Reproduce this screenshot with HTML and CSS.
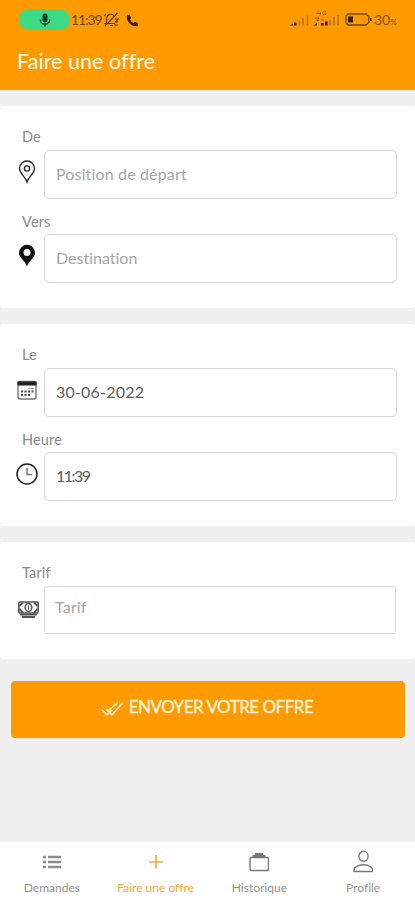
FILE: index.html
```html
<!DOCTYPE html>
<html lang="fr">
<head>
<meta charset="utf-8">
<title>Faire une offre</title>
<link rel="stylesheet" href="styles.css">
</head>
<body>
<div class="app">
  <header class="header">
    <div class="status">
      <div class="status-left">
        <span class="mic-pill">
          <svg width="12" height="14" viewBox="0 0 12 14"><rect x="3.500" y="0.500" width="5" height="9" rx="2.500" fill="#123c26"/><path d="M1.300 6.500c0 6.300 9.400 6.300 9.400 0M6 11v2.500" fill="none" stroke="#123c26" stroke-width="1.300"/></svg>
        </span>
        <span class="clock">11:39</span>
        <svg class="bell" width="17" height="15" viewBox="0 0 17 15" fill="none" stroke="#5b3a05" stroke-width="1.200"><path d="M1 11.500h11M3.500 11V6.500C4 2 9 1 11 4M7 13.500h3M14.500 1L2 14M1 4l2-2M12 7h3l-2.500 3H15M11 13h4"/></svg>
        <svg class="phone" width="13" height="13" viewBox="0 0 13 13"><path d="M1 1.500L3.500.8 5.200 4 4 5.400c.7 1.700 1.900 2.900 3.600 3.600L9 7.800l3.200 1.700-.7 2.500C6 13.500-.5 7 1 1.500z" fill="#33220a"/></svg>
      </div>
      <div class="status-right">
        <svg width="20" height="12" viewBox="0 0 20 12"><path d="M0 11.500l3-2v2zM4 8.500h2.500v3H4z" fill="#2b1c04"/><path d="M9.500 11.500v-5M13 11.500V4M17.500 11.500V1.500" stroke="#b57410" stroke-width="1.600"/></svg>
        <svg class="signal-two" width="26" height="16" viewBox="0 0 26 16"><path d="M5 .5L2.500 3.500H7M6 2v3.500M12 1.500C8 0 7 5.500 12 4.500V3H10" fill="none" stroke="#a56b12"/><path d="M1 8h4l-2 2.500h2M7 10h3" fill="none" stroke="#80520a"/><path d="M0 15.500l3-3v3zM7 13h2.500v2.500H7zM11 11.500h2.500v4H11z" fill="#2b1c04"/><path d="M16 15.500v-6M20 15.500V7M24 15.500V5" stroke="#b57410" stroke-width="1.600"/></svg>
        <svg class="battery" width="27" height="13" viewBox="0 0 27 13"><path d="M3 1h18l3 3v5l-3 3H3L1 10V3z" fill="none" stroke="#704808" stroke-width="1.300"/><path d="M3 3.500h5v6H3zM25 5h1.500v3H25z" fill="#33220a"/></svg>
        <span class="percent">30<small>%</small></span>
      </div>
    </div>
    <h1 class="title">Faire une offre</h1>
  </header>
  <main class="content">
    <section class="card">
      <label class="label">De</label>
      <div class="row">
        <svg class="icon" width="18" height="24" viewBox="0 0 18 24" fill="none" stroke="#292929" stroke-width="1.400"><path d="M9 22C7 16 1.500 13.500 1.500 8.500a7.500 7.500 0 0 1 15 0C16.500 13.500 11 16 9 22z"/><circle cx="9" cy="8.500" r="2.600"/></svg>
        <div class="field placeholder">Position de départ</div>
      </div>
      <label class="label">Vers</label>
      <div class="row">
        <svg class="icon" width="18" height="24" viewBox="0 0 18 24"><path fill-rule="evenodd" d="M9 22.500C7 16.500 1 14 1 8.800a8 8 0 0 1 16 0C17 14 11 16.500 9 22.500zM9 12a3.500 3.500 0 1 0 0-7 3.500 3.500 0 0 0 0 7z" fill="#111"/></svg>
        <div class="field placeholder destination">Destination</div>
      </div>
    </section>
    <section class="card">
      <label class="label">Le</label>
      <div class="row">
        <svg class="icon icon-date" width="20" height="20" viewBox="0 0 20 20"><rect x="1" y="1.500" width="18" height="17.500" rx="2" fill="#fff" stroke="#777" stroke-width="1.400"/><path d="M.5 1.500h19v4H.5z" fill="#222"/><path d="M11 8.500h6" stroke="#aaa"/><path d="M4 11.500h13M4 15h9" stroke="#444" stroke-width="1.800" stroke-dasharray="2 1.500"/></svg>
        <div class="field date">30-06-2022</div>
      </div>
      <label class="label">Heure</label>
      <div class="row">
        <svg class="icon icon-clock" width="22" height="22" viewBox="0 0 22 22" fill="none"><circle cx="11" cy="11" r="10" stroke="#222" stroke-width="1.500"/><path d="M11 5v6.500h5" stroke="#777" stroke-width="1.500"/></svg>
        <div class="field time">11:39</div>
      </div>
    </section>
    <section class="card card-price">
      <label class="label">Tarif</label>
      <div class="row">
        <svg class="icon icon-money" width="21" height="17" viewBox="0 0 21 17" fill="none" stroke="#555"><rect x=".8" y="1" width="19.400" height="11" rx="1" stroke-width="1.600"/><ellipse cx="10.500" cy="6.500" rx="3.300" ry="4" stroke-width="1.600"/><path d="M1.500 5L5 1.500M1.500 8L5 11.500M19.500 5L16 1.500M19.500 8L16 11.500" stroke-width="1.800"/><path d="M10.500 4.500v4" stroke-width="1.200"/><path d="M2 13.600h17M4 15.900h13" stroke-width="2"/></svg>
        <div class="field placeholder">Tarif</div>
      </div>
    </section>
    <button class="submit">
      <svg width="23" height="16" viewBox="0 0 23 16" fill="none" stroke="#fff4df" stroke-width="1.500"><path d="M1 9l5 5M7.500 9.500L17 1.500M5.500 8l5.500 6L22 1.500M6 14l5-5"/></svg>
      <span>ENVOYER VOTRE OFFRE</span>
    </button>
  </main>
  <nav class="nav">
    <a class="tab"><svg width="20" height="24" viewBox="0 0 20 24" stroke="#8c8c8c" stroke-width="2.400"><path d="M1 7h3M6 7h13M1 12h3M6 12h13M1 17h3M6 17h13"/></svg><span>Demandes</span></a>
    <a class="tab active"><svg width="20" height="24" viewBox="0 0 20 24" stroke="#f5a83a" stroke-width="1.700"><path d="M10 5v13.500M3 12h14"/></svg><span>Faire une offre</span></a>
    <a class="tab"><svg width="20" height="24" viewBox="0 0 20 24" fill="none" stroke="#777" stroke-width="1.400"><rect x="1" y="7.500" width="18.500" height="13" rx="1.500"/><path d="M3.500 6h13M6 4h8" stroke-width="2"/></svg><span>Historique</span></a>
    <a class="tab"><svg width="20" height="24" viewBox="0 0 20 24" fill="none" stroke="#777" stroke-width="1.400"><ellipse cx="10.500" cy="6.300" rx="4.600" ry="5"/><path d="M1 21.500C-.5 12.500 21.500 12.500 19.500 21.500z" stroke-linejoin="round"/></svg><span>Profile</span></a>
  </nav>
</div>
</body>
</html>
```
FILE: styles.css
```css
* { box-sizing: border-box; }
body { margin: 0; background: #f0f0f0; font-family: Lato, "Open Sans", sans-serif; font-variant-ligatures: none; color: #5c5c5c; }
.app { width: 415px; height: 900px; display: flex; flex-direction: column; overflow: hidden; }
.header { height: 90px; background: #ff9b00; flex: none; }
.status { display: flex; justify-content: space-between; height: 39px; padding: 0 17px 0 19px; }
.status-left, .status-right { display: flex; align-items: center; }
.mic-pill { width: 51px; height: 21px; border-radius: 11px; background: #3ddc84; display: flex; align-items: center; justify-content: center; }
.clock { font-size: 14px; color: #704808; margin-left: 1px; width: 32px; letter-spacing: -1.1px; }
.phone { margin: 2px 0 0 6px; }
.signal-two { margin: -4px 0 0 4px; }
.status-right > svg:first-child { margin-top: 1px; }
.battery { margin: 0 2px 0 5px; }
.percent { font-size: 14px; color: #80520a; width: 24px; white-space: nowrap; }
.percent small { font-size: 8px; }
.title { margin: 0; padding-left: 17px; font-size: 21.5px; line-height: 28px; margin-top: 8px; font-weight: 400; letter-spacing: 0.05px; color: #fffaf0; }
.content { flex: 1; padding-top: 16px; }
.card { background: #fff; height: 202px; margin-bottom: 16px; padding: 22px 18px 0 17px; border-radius: 3px; }
.label { display: block; height: 18px; margin: 0 0 4px 5px; font-size: 14.5px; line-height: 18px; letter-spacing: 0.15px; color: #8a8a8a; }
.row { display: flex; align-items: center; height: 48.5px; }
.row + .label { margin-top: 14px; }
.icon { flex: none; margin-top: -5px; margin-left: 1px; }
.icon-date { margin-left: 0; }
.icon-clock { margin-left: -1px; }
.field { width: 353px; height: 49px; margin-left: auto; flex: none; border: 1px solid #d5d5d5; border-radius: 5px; padding-left: 11px; font-size: 16px; line-height: 46px; letter-spacing: 0.15px; white-space: nowrap; }
.placeholder { color: #a5a5a5; }
.destination { letter-spacing: 0; }
.date { letter-spacing: 0.2px; }
.time { letter-spacing: -1.5px; }
.card-price { height: 117px; padding-right: 19px; margin-bottom: 22px; }
.card-price .field { width: 352px; height: 48px; line-height: 40px; border-radius: 3px; padding-left: 10px; }
.icon-money { margin-top: -2px; }
.submit { display: flex; justify-content: center; width: 394px; height: 57px; margin: 0 0 0 11px; padding: 0 2px 7px 0; align-items: center; border: 0; border-radius: 4px; background: #ff9b00; color: #fff4df; font-family: inherit; font-size: 17px; font-weight: 400; gap: 5px; }
.submit svg { margin-top: 5px; }
.submit span { -webkit-text-stroke: 0.3px #fff4df; letter-spacing: -0.5px; white-space: nowrap; }
.nav { height: 58px; background: #fff; display: grid; grid-template-columns: repeat(4, 1fr); flex: none; }
.tab { display: flex; flex-direction: column; align-items: center; padding-top: 8px; font-size: 12px; line-height: 16px; color: #929292; white-space: nowrap; }
.tab span { margin-top: 6px; }
.active { color: #f5a83a; }
```
